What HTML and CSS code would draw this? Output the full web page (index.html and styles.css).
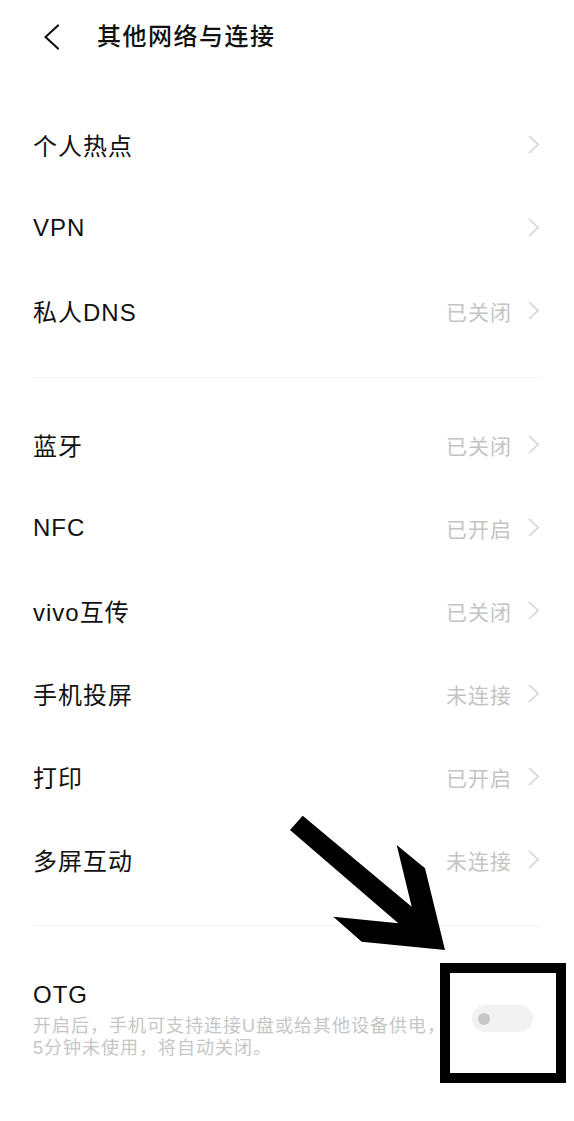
FILE: index.html
```html
<!DOCTYPE html>
<html lang="zh-CN">
<head>
    <meta charset="UTF-8">
    <meta name="viewport" content="width=device-width, initial-scale=1.0">
    <title>其他网络与连接</title>
    <link rel="stylesheet" href="styles.css">
</head>
<body>
<div class="page">

    <header class="top-bar">
        <svg class="back-icon" width="16" height="26" viewBox="0 0 16 26">
            <polyline points="15,1.5 2.5,13 15,24.5" fill="none" stroke="#111" stroke-width="2.2" stroke-linecap="round" stroke-linejoin="round"/>
        </svg>
        <h1 class="title">其他网络与连接</h1>
    </header>

    <section class="group group-first">
        <div class="row">
            <span class="label">个人热点</span>
            <svg class="chevron" width="11" height="19" viewBox="0 0 11 19"><polyline points="1,1 10,9.5 1,18" fill="none" stroke="#d4d4d4" stroke-width="1.6"/></svg>
        </div>
        <div class="row">
            <span class="label">VPN</span>
            <svg class="chevron" width="11" height="19" viewBox="0 0 11 19"><polyline points="1,1 10,9.5 1,18" fill="none" stroke="#d4d4d4" stroke-width="1.6"/></svg>
        </div>
        <div class="row">
            <span class="label">私人DNS</span>
            <span class="status">已关闭</span>
            <svg class="chevron" width="11" height="19" viewBox="0 0 11 19"><polyline points="1,1 10,9.5 1,18" fill="none" stroke="#d4d4d4" stroke-width="1.6"/></svg>
        </div>
    </section>

    <div class="divider"></div>

    <section class="group group-second">
        <div class="row">
            <span class="label">蓝牙</span>
            <span class="status">已关闭</span>
            <svg class="chevron" width="11" height="19" viewBox="0 0 11 19"><polyline points="1,1 10,9.5 1,18" fill="none" stroke="#d4d4d4" stroke-width="1.6"/></svg>
        </div>
        <div class="row">
            <span class="label">NFC</span>
            <span class="status">已开启</span>
            <svg class="chevron" width="11" height="19" viewBox="0 0 11 19"><polyline points="1,1 10,9.5 1,18" fill="none" stroke="#d4d4d4" stroke-width="1.6"/></svg>
        </div>
        <div class="row">
            <span class="label">vivo互传</span>
            <span class="status">已关闭</span>
            <svg class="chevron" width="11" height="19" viewBox="0 0 11 19"><polyline points="1,1 10,9.5 1,18" fill="none" stroke="#d4d4d4" stroke-width="1.6"/></svg>
        </div>
        <div class="row">
            <span class="label">手机投屏</span>
            <span class="status">未连接</span>
            <svg class="chevron" width="11" height="19" viewBox="0 0 11 19"><polyline points="1,1 10,9.5 1,18" fill="none" stroke="#d4d4d4" stroke-width="1.6"/></svg>
        </div>
        <div class="row">
            <span class="label">打印</span>
            <span class="status">已开启</span>
            <svg class="chevron" width="11" height="19" viewBox="0 0 11 19"><polyline points="1,1 10,9.5 1,18" fill="none" stroke="#d4d4d4" stroke-width="1.6"/></svg>
        </div>
        <div class="row">
            <span class="label">多屏互动</span>
            <span class="status">未连接</span>
            <svg class="chevron" width="11" height="19" viewBox="0 0 11 19"><polyline points="1,1 10,9.5 1,18" fill="none" stroke="#d4d4d4" stroke-width="1.6"/></svg>
        </div>
    </section>

    <div class="divider"></div>

    <section class="otg">
        <div class="otg-text">
            <div class="otg-title">OTG</div>
            <div class="otg-desc">开启后，手机可支持连接U盘或给其他设备供电，5分钟未使用，将自动关闭。</div>
        </div>
        <div class="switch">
            <span class="knob"></span>
        </div>
    </section>

    <!-- annotation drawn over the screenshot -->
    <svg class="mark-arrow" width="574" height="1121" viewBox="0 0 574 1121">
        <polygon points="290,830 302.7,815.7 411.7,906.7 396.7,845 425,868.3 445,950 361.7,941.7 333.3,916.7 398.3,923.3" fill="#000"/>
    </svg>
    <div class="mark-box"></div>

</div>
</body>
</html>
```

FILE: styles.css
```css
body {
    margin: 0;
    background: #fff;
    font-family: "Liberation Sans", "Noto Sans CJK SC", sans-serif;
    color: #111;
}

.page {
    position: relative;
    width: 574px;
    height: 1121px;
    overflow: hidden;
}

.top-bar {
    display: flex;
    align-items: center;
    height: 74px;
    padding-left: 43px;
}
.back-icon {
    display: block;
    margin-right: 38px;
}
.title {
    margin: 0;
    font-size: 24px;
    font-weight: 500;
    letter-spacing: 1.5px;
    line-height: 30px;
}

.group-first {
    padding-top: 29px;
    padding-bottom: 25px;
}
.group-second {
    padding-top: 25px;
    padding-bottom: 24px;
}

.row {
    display: flex;
    align-items: center;
    height: 83px;
    padding: 0 35px 0 33px;
}
.label {
    flex: 1;
    font-size: 24px;
    letter-spacing: 1px;
}
.status {
    font-size: 21px;
    letter-spacing: 1px;
    color: #c4c4c4;
}
.chevron {
    display: block;
    margin-left: 16px;
}

.divider {
    height: 1px;
    margin: 0 33px;
    background: #f3f3f3;
}

.otg {
    display: flex;
    align-items: flex-start;
    padding: 57px 41px 0 33px;
}
.otg-text {
    flex: 1;
    padding-right: 20px;
}
.otg-title {
    font-size: 24px;
    line-height: 24px;
    letter-spacing: 1px;
}
.otg-desc {
    margin-top: 8px;
    font-size: 18px;
    line-height: 22px;
    letter-spacing: 1px;
    color: #c6c6c6;
}

.switch {
    position: relative;
    width: 61px;
    height: 27px;
    margin-top: 22px;
    border-radius: 14px;
    background: #f2f2f2;
}
.knob {
    position: absolute;
    left: 6px;
    top: 7.5px;
    width: 12px;
    height: 12px;
    border-radius: 50%;
    background: #c8c8c8;
}

.mark-arrow {
    position: absolute;
    left: 0;
    top: 0;
}
.mark-box {
    position: absolute;
    left: 440px;
    top: 963px;
    width: 106px;
    height: 100px;
    border: 10px solid #000;
}
```
